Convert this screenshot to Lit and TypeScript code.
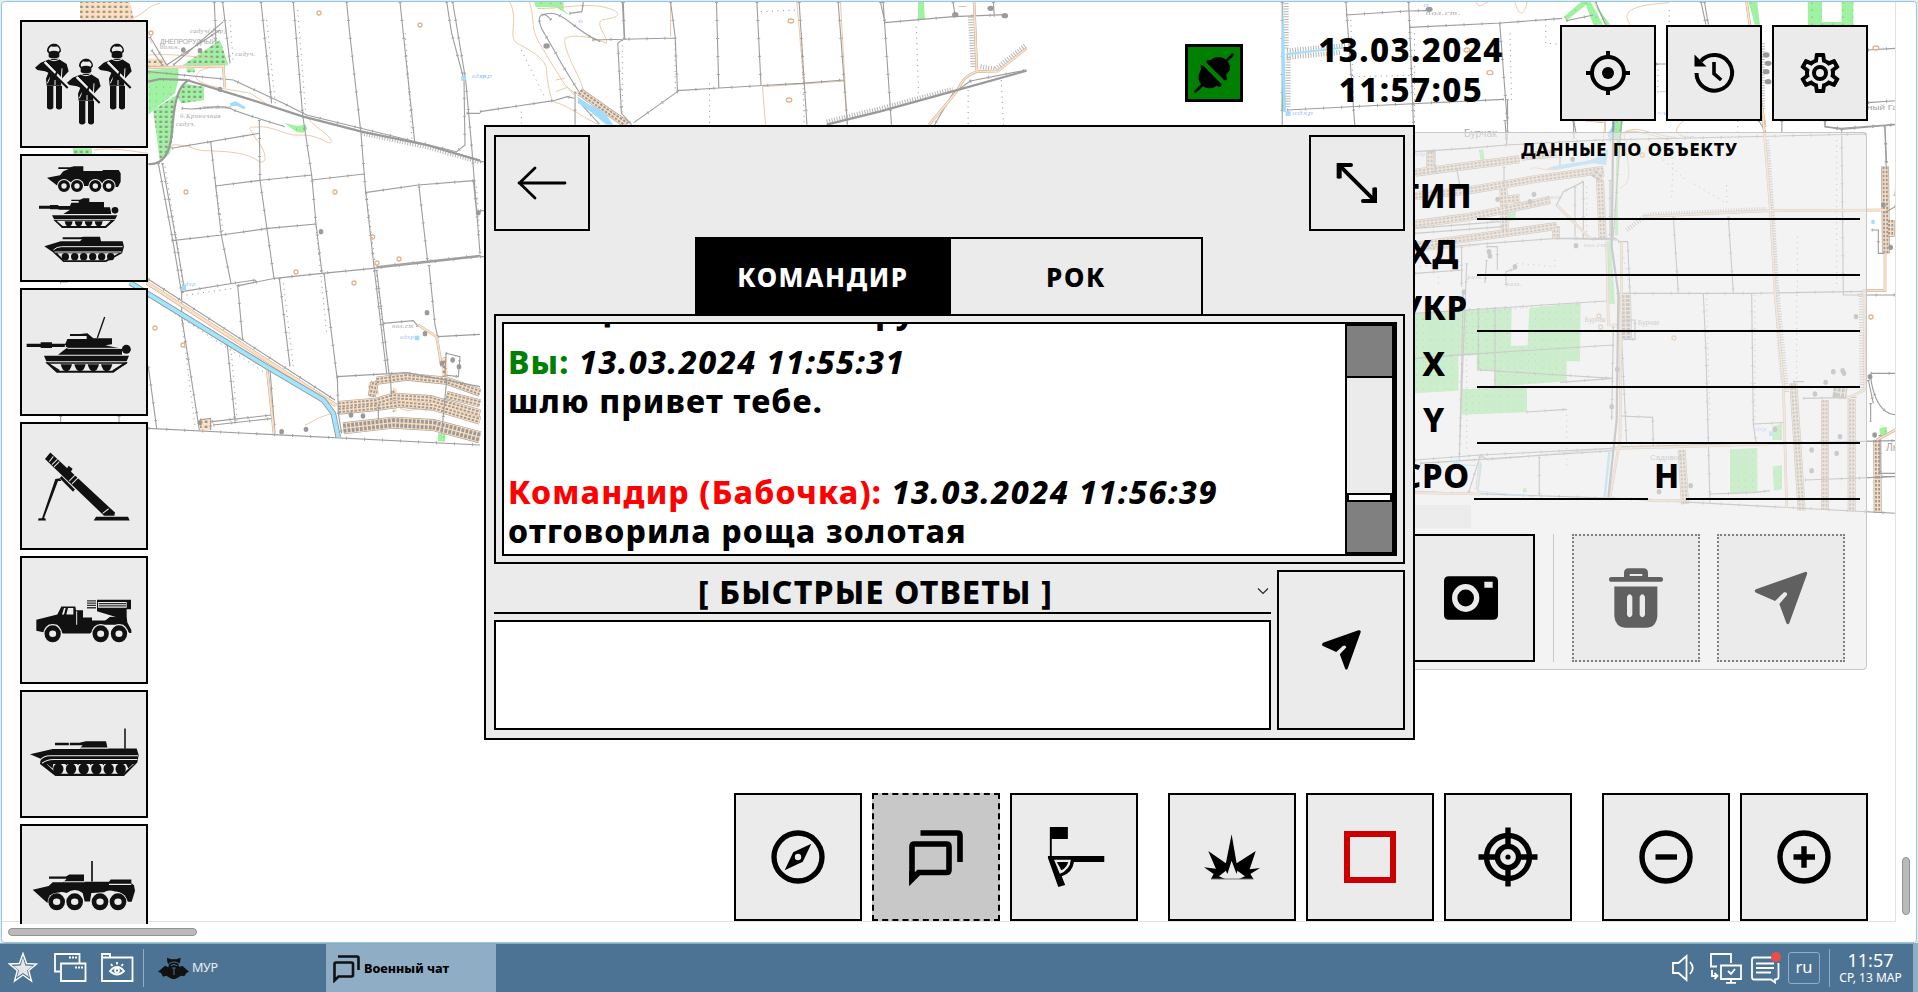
import { LitElement, html, svg, css } from "lit";
import { customElement, property } from "lit/decorators.js";

/* ---------- map geometry, grouped by tile ---------- */

interface Tile {
  transform: string;
  green?: string;
  garden?: string;
  water?: string;
  canal?: string;
  peach?: string;
  street?: string;
  wide?: string;
  road?: string;
  contour?: string;
  rail?: string;
  hatch?: string;
  line: string;
  dots?: string;
  marks?: number[][];
  blobs?: number[][];
  labels?: [number, number, string, string][];
}

const tiles: Tile[] = [
  {
    transform: "scale(.33333)",
    green:
      "M445 210L535 205V240L525 280L460 330L445 345ZM852 368L890 378L918 374L922 388L910 398L890 396ZM1315 1300L1337 1302L1335 1325L1313 1323Z",
    garden:
      "M550 250L612 260V300L545 310L530 290ZM460 330L530 285L520 400L510 460L480 485ZM548 196L660 120L685 196ZM560 205H584V217H560ZM218 445H275V462H220Z",
    water: "M690 310L706 304L738 322L732 328L712 318L692 318ZM545 856H558V870H545ZM1244 1007H1258V1021H1244ZM1384 228H1398V242H1384Z",
    canal: "M390 848L800 1100L970 1200L1000 1240L1015 1312",
    peach: "M240 6L390 6L402 60L240 60ZM445 175L490 178L500 200L445 202ZM1105 1150L1130 1140L1138 1185L1105 1180ZM1178 1165L1190 1165V1235H1178ZM600 1255H632V1290H600ZM1325 1075L1340 1070L1345 1150L1325 1150Z",
    street: "M1015 1215L1130 1205L1180 1190L1290 1197L1440 1240M1015 1232L1130 1221L1200 1211L1300 1220L1440 1262M1130 1142L1220 1130L1340 1142L1440 1178M1340 1185L1440 1210M1115 1190L1125 1145",
    wide: "M1030 1285L1180 1268L1300 1275L1440 1312",
    road: "M440 846L1010 1215M440 850L1006 1217M445 203L670 198L674 262M802 1110L822 1300M1255 975L1310 1010L1325 1100",
    contour:
      "M445 165C520 160 560 170 650 175M675 198C620 200 590 210 588 232C600 262 700 268 750 280C790 300 800 320 830 325M515 435C560 430 590 455 620 452C680 455 740 455 780 486C810 490 790 440 770 420C740 370 740 385 790 380C850 390 860 410 910 405C960 405 990 440 994 425C990 400 950 390 925 355M1005 1240C960 1245 930 1270 915 1276M1280 1235C1260 1210 1240 1245 1200 1225M390 55C430 50 440 15 480 10M455 130C450 110 420 90 410 60M445 460C400 455 340 440 280 450",
    rail: "M445 245L480 237L560 240L740 295L910 350L1085 395L1280 435L1440 482M445 492C490 495 510 460 515 400C520 330 530 250 570 240",
    hatch: "M1085 399L1280 440L1440 486",
    line:
      "M643 6L648 130M668 6L690 190M783 6L815 310M880 6L908 345L935 525L948 672L966 820M972 820L1012 1140M1040 6L1048 90L1083 400L1097 575L1122 800L1160 1120M1200 6L1244 425M1340 6L1355 100L1392 240M1358 6L1397 240L1415 440L1440 760M1130 810L1167 1120M475 490L520 730L545 880V950L598 1290M487 490L530 730L552 860M632 425L664 705L693 850M778 360L780 540L822 835M1257 560L1283 785M1287 795L1305 975L1313 1010M713 855L728 1020M838 835L870 1100M682 1035L706 1270M445 1100L470 1285M515 445L778 400M645 558L790 540L935 525M935 540L1092 522M1095 578L1255 555L1420 542M515 722L665 705L805 685L948 672M545 875L700 850L765 840L770 850M715 857L825 835L966 820L1120 805L1440 770M1130 800L1440 766M1150 970L1240 962L1255 980M1313 1010L1440 1003M1400 340H1440M445 215L700 240L850 310L920 345L1370 455L1395 435L1392 240M445 1285L1440 1335M445 838L1005 1200M445 888L800 1105M1012 1130L1015 1240L1025 1300M1012 1130L1220 1118L1440 1160M635 1265L815 1245M640 1275L820 1255M810 1110L825 1300M500 195L660 90M520 195L670 65M450 110L500 195M455 150L490 200M180 846L203 846M182 1248V1266M357 1248V1266M1340 1140L1325 1300M1170 1120L1175 1190M545 325C600 335 640 310 690 325C720 340 760 350 790 360C820 370 840 375 855 380M1338 1060L1380 1070L1375 1130L1335 1125ZM600 1260L632 1255V1290M1135 1220V1260M1420 540L1430 640",
    dots: "M690 60L700 190M800 60L826 310M893 30L918 350M1216 100L1236 420M495 500L535 750L550 880M648 560L670 700M948 680L980 1000M1100 580L1150 1000M850 850L880 1100M545 960L585 1280M693 1045L712 1270M560 885L700 865M455 895L790 1115M1430 560L1438 700",
    marks: [[453, 99], [957, 39], [1260, 75], [558, 576], [1005, 576], [888, 816], [1062, 849], [1131, 789], [1197, 777], [465, 984], [549, 1035], [1118, 711]],
    blobs: [[1281, 938], [1275, 1001], [1326, 1090], [1377, 1100], [963, 695], [845, 1295], [918, 1288], [600, 1268], [1358, 1080], [1435, 638], [600, 152], [550, 150], [660, 268], [1053, 1245], [1089, 1248]],
    labels: [[570, 98, "садуч(отр)", "i"], [480, 132, "ДНЕПРОРУДНЫЙ", "s"], [480, 148, "больн.", "i"], [706, 167, "садуч.", "i"], [608, 328, "пионегка", "i"], [540, 354, "б.Криничная", "i"], [528, 377, "садуч.", "i"], [545, 858, "вдхр", "b"], [1200, 1017, "вдхр", "b"], [1176, 983, "пол.ст", "i"], [1416, 233, "вдхр", "b"]]
  },
  {
    transform: "translate(480 0) scale(.4592 .33333)",
    green: "M118 6H182V30L197 48L165 22H122ZM954 6H967L969 60L954 56Z",
    water: "M212 290L240 315L270 335L290 374H275L245 340L215 310Z",
    street: "M217 275L320 374",
    road: "M1076 6L1082 215L1128 213L1190 145M1082 215C1050 230 1050 250 1035 280L978 374",
    contour:
      "M65 6C85 60 60 110 80 130C110 150 150 180 145 220C150 270 155 300 160 305C200 320 230 360 260 374M108 6C120 60 110 90 130 130C150 180 170 220 185 255C200 270 210 290 215 275M125 25C170 30 240 0 290 30C310 45 300 52 265 60C250 75 280 110 275 130L250 115C220 108 200 105 185 115C180 150 215 220 225 270L330 374M415 6V110M690 6L705 245M785 6L800 374M615 260L795 243M615 260L622 374M165 240L185 235M165 275L190 262L205 285",
    rail: "M755 374L870 335L1035 272L1190 212",
    hatch: "M755 366L870 327L1030 268M1068 50L1074 205M1090 200L1122 208L1190 135",
    line:
      "M312 6L315 115M310 6L314 115L300 130L308 340L330 374M415 6L425 110L430 272M515 6L520 265M603 6L612 258M695 6L712 374M780 6L800 374M878 6L896 374M872 6L882 68L1030 50L1145 44M1030 6L1035 50M1118 6L1120 50M245 120L425 114M430 272L520 264L700 250L792 240M430 275L335 368M0 335L160 302L190 290L205 295M207 275V374M155 60C130 20 120 60 140 100L165 160C180 200 200 240 215 275M135 45C180 20 200 90 262 125M215 305L260 372M1068 243L1190 210M1068 243L1030 280L990 374M0 485H10M0 632H10M0 770H10M195 40L222 35L225 6",
    dots: "M310 120V370M500 250V374M612 35L690 30M950 80L955 280M1063 270V374M1135 240L1140 374M90 150L140 290M90 335V370M700 100L706 370M425 130V270",
    marks: [[677, 63], [673, 300]],
    blobs: [[1035, 44], [1112, 25], [1143, 47], [145, 138]],
    labels: [[214, 68, "о", "b"], [0, 233, "тр", "b"], [1042, 24, "—", "i"]]
  },
  {
    transform: "translate(1150 0) scale(.4898 .33333)",
    green:
      "M845 50L880 6H900L925 74H905L890 15L850 62ZM905 6L940 74H930ZM1222 6H1240L1245 74H1235ZM1343 6H1372V66H1412V6H1436V75H1343ZM948 362H966L958 420H948ZM270 165L278 330H268Z",
    water: "M272 6L275 160L278 336H272L268 160ZM277 160L400 140V145L277 166ZM277 334H287V348H277ZM934 405L948 365L952 370L940 430Z",
    road: "M1218 6L1250 330L1256 380M925 330V362",
    contour: "M980 74C960 30 990 15 1060 8M745 6C755 60 765 40 770 6M665 6C675 30 680 10 690 6M970 420C960 380 990 390 1060 420M1090 362C1060 395 1080 415 1110 410M930 362V398M1040 275H1055",
    hatch: "M280 152L400 137M280 172L390 157M278 10V150M282 170V320M1250 130V330",
    line:
      "M270 6V376M400 6L418 376M528 6L538 376L530 70M400 45L525 33L565 32M530 82L716 69L842 55M714 69L730 376L728 435M1125 6L1135 74M1132 6L1140 74M865 362L870 400M280 330L440 318L722 298M1033 192H1053M1466 150L1522 145M1466 308L1522 302M1378 362V380L1412 385L1522 373M1500 376L1503 500M850 62L905 45M910 6L930 74M1290 362V398M730 298V376M1243 362L1258 398",
    dots: "M540 100V370M808 60V130L835 132M410 60L415 300M1037 192V280M1200 362V398M1060 30V74M415 230L540 226M735 100L738 300",
    marks: [[647, 150], [694, 218], [1482, 144], [502, 258]],
    blobs: [[570, 28], [1258, 165], [1262, 190], [1258, 215], [1262, 245]],
    labels: [[563, 46, "пол.ст.", "i"], [291, 345, "вдхр", "b"], [558, 20, "о", "b"], [1464, 330, "ный  Гай", "s"], [1035, 346, "~v~", "b"]]
  },
  {
    transform: "translate(1400 120) scale(.33333)",
    green:
      "M42 582L335 563L333 678L383 676L388 563L542 548L540 724H500V784L283 800V752H230V705L175 708V812L42 820ZM185 808L381 800V877L185 884ZM237 90L250 88L255 130L243 132ZM650 6L665 20L652 180L655 345L645 348ZM620 365L632 362L645 552H625ZM990 988L1072 984V1116L990 1122ZM1118 1040L1146 1036V1108L1122 1112ZM1118 918L1146 912V960H1118ZM318 278L348 270L345 300L322 305ZM1438 925L1460 920L1462 945L1440 948ZM370 1105H380V1117H368Z",
    water: "M440 146C500 125 560 130 590 112L625 88L618 135L580 130C540 135 500 150 440 146ZM625 990L632 992L618 1132H610ZM240 1030L246 1032L236 1112L400 1128V1131L232 1115ZM1107 934H1120V948H1107ZM160 1022H178V1034H160ZM165 1032L230 1035V1038L165 1035ZM1414 300H1424V311H1414Z",
    street:
      "M45 158L180 140L358 118M90 95V150M365 110L470 100M45 228L200 212L420 175L610 150M310 205L315 350M45 312L200 292L300 272L450 240M45 378L150 362L300 342L470 318M600 180L608 355M468 318V355M300 240L360 235M1180 790L1205 1172M1275 840V1170M1355 838V1174M845 990L855 1152M1455 140L1458 400M1472 300V350M1432 960L1433 1178",
    wide: "M675 525L678 655M1300 815L1340 820M585 175L600 155",
    road: "M1090 0L1112 280L1125 520L1150 790L1160 1164M470 255L570 355M555 0L610 5M730 290L1110 272L1455 270M1455 400V512H1392L1395 810L1340 835M635 985L855 980L1160 970M45 1118L240 1122M240 1025L230 1110M620 365L625 615H650M665 365L660 960L630 1130M1430 960L1486 930M740 1142H850",
    contour: "M680 60C670 100 700 150 680 190L660 205M390 150C400 130 440 165 500 140M615 0L608 80M45 395L240 375M265 1020L640 984M665 45C700 5 760 50 830 52",
    rail: "M640 0L635 380L655 520L650 900L625 1132",
    hatch: "M680 330L740 285L1100 268M1100 60L1120 330L1140 700L1150 790M1104 90L1128 480L1160 820M1384 520L1386 810",
    line:
      "M45 95L200 85L320 75L600 60L1400 42M315 0L320 75M520 0L522 55M1275 0V20L1325 28L1486 14M1455 16L1460 130M1325 28L1330 525H1486M820 290L835 520M985 290L1000 518M650 520L1050 520L1395 514M910 520L918 700L930 1152M1055 520L1060 915L1068 965M45 715L200 703L640 675M240 750L640 775L480 787M45 580L620 543M235 565V752M285 562V800M185 560L190 510L178 1020M660 888L758 892L760 980M380 876L500 868M45 1020L240 1005L640 985M60 1030L640 992M1060 912L1150 908M655 365H683L690 520M45 390L200 375L470 355L650 355M45 460L190 450M665 980L1486 962M240 1005L265 1020M418 1010V1130M240 1010L205 1120M45 1115L650 1135L1486 1180M930 1122L1060 1118L1110 1112M1210 835L1370 832M1215 1080L1486 1070M1412 760H1486M1412 770C1415 800 1430 880 1486 884M1405 780L1420 850M1415 330H1435V400H1455M1486 260L1450 280M1440 945V1060H1486M1445 1070H1486M470 255L490 215L550 185V355M170 145L180 200M312 140V200M480 110V140M525 200V350M45 325L300 305M260 380H292V450M260 420L255 490M318 495V455L350 445M660 600H705V658H670M665 660L680 970M640 620L635 900M45 340L310 320M665 0L640 350M630 180V350M185 380V500M200 430L178 1010M1180 785H1212M470 355L655 360M1412 850V905M90 95H105V160",
    dots: "M820 80L815 240M980 195V250L870 185M50 600L400 560M500 868V1050M920 520L930 900M1065 525V900M1192 350V520M465 420V440L350 430M115 470V500M1190 525V780M665 380L690 510M790 120L860 180M50 160L180 145M1310 60V500M60 440L180 425M560 200V340M200 570V1000",
    marks: [[727, 105], [597, 588], [602, 621], [822, 654], [1413, 591]],
    blobs: [[402, 223], [390, 245], [293, 238], [528, 377], [267, 395], [270, 408], [345, 440], [192, 516], [1368, 590], [1300, 755], [1328, 752], [1332, 760], [1277, 787], [872, 1097], [1125, 928], [777, 1115], [1245, 822], [1305, 825], [1410, 770], [1424, 945], [1472, 382], [1450, 255], [635, 860], [652, 748], [518, 118], [1235, 990], [1235, 1052], [1310, 1000], [1320, 950]],
    labels: [[45, 108, "вдр", "b"], [192, 50, "Бурчак", "L"], [440, 236, "разв.", "i"], [552, 382, "пол.ст.", "i"], [202, 478, "разв.", "i"], [318, 499, "разв.", "i"], [554, 605, "Бурчак", "s"], [714, 616, "Бурчак", "s"], [750, 1019, "Садовое", "M"], [1058, 932, "вдхр", "b"], [1458, 992, "Лю", "L"], [1480, 228, "Л", "L"], [270, 306, "шк.", "i"]]
  }
];

@customElement("terrain-map")
export class TerrainMap extends LitElement {
  static styles = css`
    :host { display: block; }
    svg { display: block; width: 100%; height: 100%; }
    path { fill: none; vector-effect: non-scaling-stroke; }
    .green { fill: #9ff29f; }
    .speck { fill: url(#specks); }
    .plots { fill: url(#plots); }
    .water { fill: #9fdcff; }
    .canal-edge { stroke: #9a9a9a; stroke-width: 5.6; }
    .canal { stroke: #9fe6ff; stroke-width: 3.8; }
    .peach { fill: #ffdfbf; }
    .road-edge { stroke: #b4a898; stroke-width: 2.6; }
    .road { stroke: #ffdfbf; stroke-width: 1.8; }
    .street-edge { stroke: #a8a29c; stroke-width: 8; }
    .street { stroke: #fbdcbd; stroke-width: 6.8; }
    .houses { stroke: #9a9a9a; stroke-width: 5; stroke-dasharray: 2.5 1.5; }
    .core { stroke: #fbdcbd; stroke-width: 1.3; }
    .wide-edge { stroke: #a8a29c; stroke-width: 12; }
    .wide { stroke: #fbdcbd; stroke-width: 10.8; }
    .wide-houses { stroke: #9a9a9a; stroke-width: 9; stroke-dasharray: 2.8 1.3; }
    .contour { stroke: #e6c4a2; stroke-width: 0.9; }
    .rail { stroke: #9a9a9a; stroke-width: 2.2; }
    .hatch { stroke: #b5b5b5; stroke-width: 5; stroke-dasharray: 1 1.6; }
    .line { stroke: #9d9d9d; stroke-width: 1.1; }
    .ticks { stroke: #a4a4a4; stroke-width: 3; stroke-dasharray: 1 17; }
    .dots { stroke: #909090; stroke-width: 1; stroke-dasharray: 1 4.5; }
    .mark { stroke: #e0b48c; stroke-width: 1.3; }
    .blob { fill: #9a9a9a; }
    text { font-family: "Liberation Serif", serif; font-style: italic; font-size: 20px; letter-spacing: 1.5px; fill: #a4a4a4; }
    .b { fill: #9fbfff; }
    .s, .M, .L { font-family: "Liberation Sans", sans-serif; font-style: normal; letter-spacing: 0; font-size: 20px; }
    .M { font-size: 24px; }
    .L { font-size: 31px; }
  `;

  render() {
    return html`<svg viewBox="0 0 1895 921" preserveAspectRatio="xMinYMin slice">
      <defs>
        <pattern id="specks" width="21" height="21" patternUnits="userSpaceOnUse">
          <rect x="6" y="8" width="3" height="3" fill="#8fae8f"></rect>
        </pattern>
        <pattern id="plots" width="17" height="15" patternUnits="userSpaceOnUse">
          <rect x="2" y="2" width="8" height="7" fill="#8c988c"></rect>
        </pattern>
      </defs>
      ${tiles.map(
        (t) => svg`<g transform=${t.transform}>
          <path class="green" d=${t.green ?? ""}></path>
          <path class="speck" d=${t.green ?? ""}></path>
          <path class="green" d=${t.garden ?? ""}></path>
          <path class="plots" d=${t.garden ?? ""}></path>
          <path class="peach" d=${t.peach ?? ""}></path>
          <path class="plots" d=${t.peach ?? ""}></path>
          <path class="contour" d=${t.contour ?? ""}></path>
          <path class="street-edge" d=${t.street ?? ""}></path>
          <path class="street" d=${t.street ?? ""}></path>
          <path class="houses" d=${t.street ?? ""}></path>
          <path class="core" d=${t.street ?? ""}></path>
          <path class="wide-edge" d=${t.wide ?? ""}></path>
          <path class="wide" d=${t.wide ?? ""}></path>
          <path class="wide-houses" d=${t.wide ?? ""}></path>
          <path class="core" d=${t.wide ?? ""}></path>
          <path class="line" d=${t.line}></path>
          <path class="ticks" d=${t.line}></path>
          <path class="dots" d=${t.dots ?? ""}></path>
          <path class="hatch" d=${t.hatch ?? ""}></path>
          <path class="road-edge" d=${t.road ?? ""}></path>
          <path class="road" d=${t.road ?? ""}></path>
          <path class="canal-edge" d=${t.canal ?? ""}></path>
          <path class="canal" d=${t.canal ?? ""}></path>
          <path class="water" d=${t.water ?? ""}></path>
          <path class="rail" d=${t.rail ?? ""}></path>
          ${(t.marks ?? []).map(([x, y]) => svg`<path class="mark" d="M${x - 6} ${y}a6 6 0 1 0 12 0a6 6 0 1 0 -12 0"></path>`)}
          ${(t.blobs ?? []).map(([x, y]) => svg`<path class="blob" d="M${x - 7} ${y}a7 8 0 1 0 14 0a7 8 0 1 0 -14 0"></path>`)}
          ${(t.labels ?? []).map(([x, y, s, c]) => svg`<text class=${c} x=${x} y=${y}>${s}</text>`)}
        </g>`
      )}
    </svg>`;
  }
}

/* ---------- pictograms: view box plus drawing ---------- */

const soldier = (dx: number, dy: number) => svg`<g transform="translate(${dx} ${dy})">
  <path d="M141 154C141 124 183 124 183 154L178 160V170C172 176 150 176 146 170V160Z"/>
  <path class="light" d="M146 150C148 133 177 133 179 150L176 155C168 151 156 151 148 155Z"/>
  <path d="M156 132H170V140H156Z"/>
  <path d="M150 177L122 188L105 203L112 210L135 214L145 218L138 236L140 257H184L182 240L206 214L200 192L175 176Z"/>
  <path d="M141 258H160V324Q150 333 141 324ZM168 258H186V324Q177 333 168 324Z"/>
  <path class="lightline" d="M146 177Q162 187 178 177M137 185L176 226M186 205L184 236M150 232L142 250M165 240V255"/>
  <path d="M132 188L186 242" stroke="#ebebeb" stroke-width="11"/>
  <path d="M128 190L203 264" stroke="#111" stroke-width="6"/><path d="M150 232L160 246M172 214L160 240" stroke="#111" stroke-width="6"/>
</g>`;

const wheels = (xs: number[], cy: number, rx: number, ry: number, w: number) =>
  xs.map((x) => svg`<ellipse cx=${x} cy=${cy} rx=${rx} ry=${ry} fill="none" stroke="#111" stroke-width=${w}/>`);
const discs = (xs: number[], cy: number, rx: number, ry: number) =>
  xs.map((x) => svg`<ellipse cx=${x} cy=${cy} rx=${rx} ry=${ry}/>`);

const icons: Record<string, [string, unknown]> = {
  squad: ["60 60 384 384", svg`${soldier(0, 0)}${soldier(189, 0)}${soldier(96, 45)}`],
  vehicles: ["60 462 384 384", svg`
    <path d="M175 502H210L222 499H250V513H308V510H356L362 520V545L354 561H342Q325 535 308 550L300 545H270L266 558H252L248 545Q230 535 215 548Q190 530 176 560L141 533L180 526L190 514L206 507H175Z"/>
    ${[192, 231, 286, 326].map((x) => svg`<circle class="light" cx=${x} cy="558" r="21"/>`)}
    ${wheels([192, 231, 286, 326], 558, 13, 13, 10)}
    <path d="M117 617H150V615H175V618H210L214 608H236V603H214V599H240L250 595H268V606H312V622H330L334 642H190L210 629H175V628H150V626H117Z"/>
    <circle cx="345" cy="631" r="10"/>
    <path d="M156 646H352L346 657H162ZM160 659H346L318 684H186Z"/>
    <path class="light" d="M170 662H332L316 678H188Z"/>
    ${[206, 236, 266, 296].map((x) => svg`<path d="M${x - 12} 664H${x + 12}Q${x + 9} 680 ${x} 680Q${x - 9} 680 ${x - 12} 664"/>`)}
    <path d="M188 712H240L252 710H300L303 724H368L372 740L366 760L318 786H190L158 756L133 739L182 724H240L246 718H188Z"/>
    <path class="lightline" d="M160 750Q170 740 185 740H368M164 756H364"/>
    <path class="light" d="M172 760H356L316 781H192Z"/>
    ${discs([196, 224, 251, 278, 305, 332], 770, 11, 11)}`],
  tank: ["60 864 384 384", svg`
    <path d="M80 1031H122V1027H156V1031H196L202 1017H260V1008H210V1002H240L262 1000L280 1015H336V1033L316 1036L366 1046V1064H174L204 1041H156V1044H122V1041H80Z"/>
    <path d="M314 951L292 1014" stroke="#111" stroke-width="4"/><circle cx="379" cy="1048" r="13.500"/>
    <path class="lightline" d="M202 1045H366M196 1035V1046"/>
    <path d="M132 1067H387L380 1084H139ZM136 1087H384L340 1118H170Z"/>
    <path class="light" d="M148 1091H368L336 1112H176Z"/>
    ${[199, 240, 280, 320].map((x) => svg`<path d="M${x - 17} 1093H${x + 17}Q${x + 12} 1114 ${x} 1114Q${x - 12} 1114 ${x - 17} 1093"/>`)}
    <path d="M140 1088L178 1112M380 1088L340 1112" stroke="#111" stroke-width="5"/>`],
  mortar: ["60 58 384 339", svg`
    <path d="M151 139L345 298L343 306H312L135 156Z"/>
    <path class="lightline" d="M148 163L160 149M156 171L172 157M162 177L178 163M208 214L228 196M216 222L236 204M308 300L326 288"/>
    <path d="M182 204L222 240" stroke="#111" stroke-width="8"/><path d="M203 178L215 186" stroke="#111" stroke-width="10"/>
    <path d="M180 207L166 209L126 313H116L114 319H138L136 313H132L174 214H184Z"/>
    <path d="M288 309H384L389 319H281Z"/>`],
  rocket: ["60 414 384 339", svg`
    <path d="M109 583L172 569L184 548H226L228 558H249V577H276V585H315L330 575H345L291 560V530H393V555H380V574L382 590L394 610V618H388L370 596H300L270 619H188L172 596H145L130 616L109 612Z"/>
    <path class="light" d="M294 536H380V551H294ZM186 569L192 552H197L192 569ZM199 569L204 552H220V569ZM291 564L350 576L330 574L318 583H291Z"/>
    <path d="M296 540H378M296 546H378M261 533H288M261 539H288M261 545H288M261 551H288" stroke="#333" stroke-width="3.500"/>
    <path class="lightline" d="M230 560V596"/>
    <ellipse class="light" cx="158" cy="620" rx="28" ry="26"/><ellipse class="light" cx="302" cy="620" rx="28" ry="26"/><ellipse class="light" cx="357" cy="620" rx="28" ry="26"/>
    ${wheels([158, 302, 357], 620, 17.5, 15.5, 14)}`],
  bmp: ["60 768 384 339", svg`
    <path d="M165 908H238L258 904H318L323 923H410L416 940L412 960L372 996H166L120 964L122 950L90 938L158 924H238L248 914H165Z"/>
    <path d="M375 870V924" stroke="#444" stroke-width="6"/>
    <path class="lightline" d="M118 956Q130 942 150 942H414M126 962Q140 952 160 952H412M236 922H325M208 905V915"/>
    <path class="light" d="M140 964H402L368 990H170Z"/>
    <path d="M135 960L160 960L158 976ZM375 958H406L385 976Z"/>
    ${discs([175, 213, 251, 289, 326, 362], 977, 15.5, 15)}
    <path d="M190 961L200 967L206 961ZM228 961L234 967L240 961ZM266 961L272 967L278 961ZM304 961L310 967L316 961Z"/>`],
  apc: ["60 1123 384 339", svg`
    <path d="M147 1262H198L208 1257H252V1276H327L332 1270H394V1280L402 1285L405 1300L395 1329H384Q370 1300 345 1302Q325 1295 312 1304L274 1306L270 1328H254L248 1306Q225 1290 200 1306Q165 1294 142 1332L98 1297L146 1287L158 1277H190L200 1268H147Z"/>
    <path d="M276 1221V1275" stroke="#111" stroke-width="5"/>
    <path class="lightline" d="M192 1276H254M327 1283H394"/>
    ${[170, 224, 300, 354].map((x) => svg`<ellipse class="light" cx=${x} cy="1329" rx="27" ry="24"/>`)}
    ${wheels([170, 224, 300, 354], 1329, 18, 15.5, 14)}`],
  compass: ["0 0 128 128", svg`<g transform="translate(32 32) scale(2.6667)"><path fill-rule="evenodd" d="M7,17L10.2,10.2L17,7L13.8,13.8L7,17M12,10.8A1.2,1.2 0 0,0 10.8,12A1.2,1.2 0 0,0 12,13.2A1.2,1.2 0 0,0 13.2,12A1.2,1.2 0 0,0 12,10.8M12,2A10,10 0 0,1 22,12A10,10 0 0,1 12,22A10,10 0 0,1 2,12A10,10 0 0,1 12,2M12,4A8,8 0 0,0 4,12A8,8 0 0,0 12,20A8,8 0 0,0 20,12A8,8 0 0,0 12,4Z"/></g>`],
  chat: ["0 0 128 128", svg`<path class="k" stroke-width="5.600" d="M48.500 40H85.500Q88 40 88 42.500V69"/><path class="k" stroke-width="5.600" d="M40 85V53.500Q40 51 42.500 51H74.500Q77 51 77 53.500V77Q77 79.500 74.500 79.500H46.500L40 86Z"/><path d="M37.200 93L48 82L40 78H37.200Z"/>`],
  flag: ["758 39 334 384", svg`<path d="M862 141H909V177H867V228H1004V246H925Q920 280 893 289L902 315L884 321L857 234V228H862Z"/><path class="light" d="M873 239H917Q914 270 888 281Z"/><path d="M880 246H910Q905 264 892 271Z"/>`],
  blast: ["1171 39 334 384", svg`<path d="M1337 163L1350 250L1400 213L1384 268L1411 264L1386 282L1394 297H1356L1372 289L1352 272L1350 282L1337 242L1326 282L1322 272L1304 289L1320 297H1283L1290 282L1265 262L1296 266L1276 213L1322 250Z"/><path d="M1283 297H1394" stroke="#777" stroke-width="3"/>`],
  square: ["0 0 128 128", svg`<rect x="41" y="41" width="46" height="46" fill="none" stroke="#c00" stroke-width="6"/>`],
  target: ["0 0 128 128", svg`<g class="k" stroke-width="5.400"><circle cx="64" cy="64" r="21.500"/><circle cx="64" cy="64" r="10.600"/><path d="M64 34.500V54M64 74V93.500M34.500 64H54M74 64H93.500"/></g><circle cx="64" cy="64" r="2.600"/>`],
  minus: ["0 0 128 128", svg`<g class="k" stroke-width="5.400"><circle cx="64" cy="64" r="24"/><path d="M53.500 64H75"/></g>`],
  plus: ["0 0 128 128", svg`<g class="k" stroke-width="5.400"><circle cx="64" cy="64" r="24"/><path d="M53.500 64H75M64 53.300V74.700"/></g>`],
  locate: ["1170 45 288 288", svg`<g class="k" stroke-width="12"><circle cx="1314" cy="189" r="48"/><path d="M1314 123V142M1314 236V255M1248 189H1266M1362 189H1380"/></g><circle cx="1314" cy="189" r="18"/>`],
  history: ["0 0 96 96", svg`<path class="k" stroke-width="4" d="M30.500 48A17.800 17.800 0 1 0 35 36"/><path d="M28.500 29.500L40.500 41.500H28.500Z"/><path class="k" stroke-width="3.600" d="M48 37V48.700L55.200 55"/>`],
  gear: ["0 0 96 96", svg`<g transform="translate(24 24) scale(2)"><path fill-rule="evenodd" d="M12,8A4,4 0 0,1 16,12A4,4 0 0,1 12,16A4,4 0 0,1 8,12A4,4 0 0,1 12,8M12,10A2,2 0 0,0 10,12A2,2 0 0,0 12,14A2,2 0 0,0 14,12A2,2 0 0,0 12,10M10,22C9.75,22 9.54,21.82 9.5,21.58L9.13,18.93C8.5,18.68 7.96,18.34 7.44,17.94L4.95,18.95C4.73,19.03 4.46,18.95 4.34,18.73L2.34,15.27C2.21,15.05 2.27,14.78 2.46,14.63L4.57,12.97L4.5,12L4.57,11L2.46,9.37C2.27,9.22 2.21,8.95 2.34,8.73L4.34,5.27C4.46,5.05 4.73,4.96 4.95,5.05L7.44,6.05C7.96,5.66 8.5,5.32 9.13,5.07L9.5,2.42C9.54,2.18 9.75,2 10,2H14C14.25,2 14.46,2.18 14.5,2.42L14.87,5.07C15.5,5.32 16.04,5.66 16.56,6.05L19.05,5.05C19.27,4.96 19.54,5.05 19.66,5.27L21.66,8.73C21.79,8.95 21.73,9.22 21.54,9.37L19.43,11L19.5,12L19.43,13L21.54,14.63C21.73,14.78 21.79,15.05 21.66,15.27L19.66,18.73C19.54,18.95 19.27,19.04 19.05,18.95L16.56,17.95C16.04,18.34 15.5,18.68 14.87,18.93L14.5,21.58C14.46,21.82 14.25,22 14,22H10M11.25,4L10.88,6.61C9.68,6.86 8.62,7.5 7.85,8.39L5.44,7.35L4.69,8.65L6.8,10.2C6.4,11.37 6.4,12.64 6.8,13.8L4.68,15.36L5.43,16.66L7.86,15.62C8.63,16.5 9.68,17.14 10.87,17.38L11.24,20H12.76L13.13,17.39C14.32,17.14 15.37,16.5 16.14,15.62L18.57,16.66L19.32,15.36L17.2,13.81C17.6,12.64 17.6,11.37 17.2,10.2L19.31,8.65L18.56,7.35L16.15,8.39C15.38,7.5 14.32,6.86 13.12,6.62L12.75,4H11.25Z"/></g>`],
  back: ["0 0 96 96", svg`<path class="k" stroke-width="2.800" stroke-linecap="round" stroke-linejoin="round" d="M71 48H25M41 33L25.500 48L41 63"/>`],
  expand: ["417 375 288 288", svg`<path class="k" stroke-width="12" stroke-linecap="round" d="M507 500V465H543M579 573H615V538M508 466L614 572"/><path d="M500 459H515V505H500ZM607 533H621V579H607Z"/>`],
  camera: ["21 1107 384 378", svg`<path fill-rule="evenodd" d="M147 1232H279Q294 1232 294 1247V1346Q294 1360 279 1360H147Q132 1360 132 1346V1247Q132 1232 147 1232ZM253 1248V1266H278V1248ZM197 1255A41 41 0 1 0 197 1337A41 41 0 1 0 197 1255ZM197 1271A25 25 0 1 1 197 1321A25 25 0 1 1 197 1271Z"/>`],
  trash: ["516 1107 384 378", svg`<g fill="#606060"><path fill-rule="evenodd" d="M672 1234V1222Q672 1208 686 1208H730Q744 1208 744 1222V1234H781Q789 1234 789 1241Q789 1248 781 1248H635Q627 1248 627 1241Q627 1234 635 1234ZM689 1225V1231H727V1225Z"/><path fill-rule="evenodd" d="M643 1262H772V1350Q768 1384 738 1384H676Q646 1382 643 1350ZM681 1292V1346Q689 1360 697 1346V1292Q689 1278 681 1292ZM719 1292V1346Q727 1360 735 1346V1292Q727 1278 719 1292Z"/></g>`],
  plane: ["951 1107 384 378", svg`<g fill="#606060"><path d="M1215 1219Q1223 1217 1221 1226L1168 1370Q1163 1377 1159 1370L1138 1314L1161 1287Q1163 1277 1152 1279L1125 1305L1067 1280Q1061 1274 1068 1270Z"/></g>`],
  send: ["1329 810 214 480", svg`<path d="M1465 991Q1470 990 1469 996L1447 1106Q1445 1111 1443 1106L1434 1063L1445 1042Q1443 1034 1439 1038L1428 1056L1405 1037Q1403 1032 1406 1028Z"/>`],
  plug: ["45 102 174 174", svg`<path d="M122 150Q138 136 160 144Q184 158 180 180L168 194L172 204Q172 213 163 211L110 158Q108 149 116 150Z"/><path d="M188 134L166 156" stroke="#000" stroke-width="8" stroke-linecap="round"/><path d="M92 167Q97 164 101 168L154 222Q157 230 148 231L140 227Q124 240 104 232Q82 220 86 196L93 178Z"/><path d="M77 244L98 224" stroke="#000" stroke-width="8" stroke-linecap="round"/>`],
};

@customElement("tool-button")
export class ToolButton extends LitElement {
  @property() icon = "";
  @property({ reflect: true }) kind = "";

  static styles = css`
    :host { display: block; box-sizing: border-box; width: 128px; height: 128px; flex: none; background: #ebebeb; border: 2px solid #000; }
    :host([kind~="small"]) { width: 96px; height: 96px; }
    :host([kind~="tall"]) { height: 160px; }
    :host([kind~="on"]) { background: #c8c8c8; border-style: dashed; }
    :host([kind~="off"]) { border: 2px dotted #808080; }
    :host([kind~="status"]) { width: 58px; height: 58px; background: #008000; border-width: 3px; }
    svg { display: block; width: calc(100% + 4px); height: calc(100% + 4px); margin: -2px; fill: #000; }
    :host([kind~="status"]) svg { width: 58px; height: 58px; margin: -3px; }
    :host([kind~="unit"]) svg { fill: #111; }
    .light { fill: #ebebeb; }
    .lightline { fill: none; stroke: #ebebeb; stroke-width: 3px; }
    .k { fill: none; stroke: #000; }
  `;

  render() {
    const [box, art] = icons[this.icon] ?? ["0 0 1 1", ""];
    return html`<svg viewBox=${box} preserveAspectRatio="none">${art}</svg>`;
  }
}

@customElement("chat-window")
export class ChatWindow extends LitElement {
  static styles = css`
    :host { display: flex; flex-direction: column; box-sizing: border-box; width: 931px; height: 615px; border: 2px solid #000; background: #ebebeb; padding: 8px; font: 800 32px/39px "Noto Sans", sans-serif; letter-spacing: 1.17px; color: #000; }
    .head { display: flex; justify-content: space-between; }
    .tabs { display: flex; width: 508px; margin: 6px 0 0 201px; height: 77px; }
    .tab { flex: 1; box-sizing: border-box; border: 2px solid #000; border-bottom: 0; font-size: 26px; letter-spacing: 1.6px; line-height: 76px; text-align: center; }
    .tab.active { flex: 0 0 256px; background: #000; color: #fff; }
    .tab.idle { border-left: 0; }
    .frame { box-sizing: border-box; height: 250px; border: 2px solid #000; padding: 6px; }
    .log { display: flex; box-sizing: border-box; height: 234px; border: 2px solid #000; background: #fff; }
    .lines { flex: 1; display: flex; flex-direction: column; justify-content: flex-end; overflow: hidden; padding: 0 0 4px 4px; }
    .msg { flex: none; white-space: pre; margin-top: 12.600px; }
    .msg .blank { height: 39px; }
    .cut { display: flex; height: 39px; }
    .cut .a { padding-left: 81px; width: 286px; }
    .who { color: #008000; }
    .who.boss { color: #f00; }
    .when { font-style: italic; letter-spacing: 1.45px; }
    .bar { display: flex; flex-direction: column; box-sizing: border-box; width: 50px; background: #ebebeb; border: solid #000; border-width: 2px 3px 2px 2px; }
    .cap { height: 50px; background: #808080; }
    .track { flex: 1; border-top: 2px solid #000; display: flex; flex-direction: column; justify-content: flex-end; }
    .thumb { height: 5px; background: #fff; border: 2px solid #000; }
    .foot { display: flex; gap: 6px; margin-top: 6px; }
    .entry { flex: 1; display: flex; flex-direction: column; gap: 6px; }
    .quick { display: flex; align-items: center; box-sizing: border-box; height: 44px; border-bottom: 2px solid #000; }
    .quick .label { flex: 1; text-align: center; line-height: 43px; }
    .quick svg { width: 14px; height: 10px; }
    .box { flex: 1; box-sizing: border-box; border: 2px solid #000; background: #fff; }
  `;

  render() {
    return html`
      <div class="head">
        <tool-button icon="back" kind="small"></tool-button>
        <tool-button icon="expand" kind="small"></tool-button>
      </div>
      <div class="tabs">
        <div class="tab active">КОМАНДИР</div>
        <div class="tab idle">РОК</div>
      </div>
      <div class="frame">
        <div class="log">
          <div class="lines">
            <div class="msg cut"><span class="a">ц</span><span>ру</span></div>
            <div class="msg"><span class="who">Вы:</span> <span class="when">13.03.2024 11:55:31</span><br>шлю привет тебе.<div class="blank"></div></div>
            <div class="msg"><span class="who boss">Командир (Бабочка):</span> <span class="when">13.03.2024 11:56:39</span><br>отговорила роща золотая</div>
          </div>
          <div class="bar">
            <div class="cap"></div>
            <div class="track"><div class="thumb"></div></div>
            <div class="cap"></div>
          </div>
        </div>
      </div>
      <div class="foot">
        <div class="entry">
          <div class="quick">
            <span class="label">[ БЫСТРЫЕ ОТВЕТЫ ]</span>
            <svg viewBox="0 0 14 10"><path d="M1 2.500L6 7.500L11 2.500" fill="none" stroke="#222" stroke-width="1.100"></path></svg>
          </div>
          <div class="box"></div>
        </div>
        <tool-button icon="send" kind="tall"></tool-button>
      </div>
    `;
  }
}

@customElement("object-panel")
export class ObjectPanel extends LitElement {
  static styles = css`
    :host { display: flex; flex-direction: column; box-sizing: border-box; width: 468px; height: 538px; background: rgba(235, 235, 235, 0.6); border: 1px solid #c8c8c8; border-radius: 4px; font: 800 33px/44px "Noto Sans", sans-serif; letter-spacing: 0.6px; color: #000; }
    .title { box-sizing: border-box; height: 31px; font-size: 18px; letter-spacing: 0.8px; line-height: 33px; text-align: center; padding-right: 7px; }
    .row { display: flex; height: 56px; align-items: flex-end; }
    .row .name { width: 68px; text-align: center; align-self: center; padding-top: 8px; white-space: nowrap; }
    .form { padding: 0 6px 0 0; }
    .line { flex: 1; height: 2px; background: #000; }
    .note { width: 71px; height: 23px; margin-top: 5px; background: rgba(230, 230, 230, 0.5); }
    .actions { display: flex; align-items: stretch; padding-left: 7px; margin-top: 6px; }
    .rule { width: 1px; margin: 0 18px; background: #c8c8c8; }
    .gap { width: 17px; }
    .pad { width: 9px; }
    .pad.last { width: 6px; }
    .row .mid { width: 38px; }
  `;

  render() {
    return html`
      <div class="title">ДАННЫЕ ПО ОБЪЕКТУ</div>
      <div class="form">
        ${["ТИП", "ХД", "УКР", "X", "Y"].map(
          (n) => html`<div class="row"><span class="name">${n}</span><span class="pad"></span><span class="line"></span></div>`
        )}
        <div class="row">
          <span class="name">СРО</span><span class="pad last"></span><span class="line"></span>
          <span class="name mid">H</span><span class="line"></span>
        </div>
      </div>
      <div class="note"></div>
      <div class="actions">
        <tool-button icon="camera"></tool-button>
        <span class="rule"></span>
        <tool-button icon="trash" kind="off"></tool-button>
        <span class="gap"></span>
        <tool-button icon="plane" kind="off"></tool-button>
      </div>
    `;
  }
}

@customElement("task-bar")
export class TaskBar extends LitElement {
  static styles = css`
    :host { display: flex; align-items: center; box-sizing: border-box; height: 49px; border-top: 1px solid #8fa9bd; background: #4d7394; color: #fff; font: 14px/18px "Noto Sans", sans-serif; }
    svg { display: block; fill: none; stroke: #fff; stroke-width: 1.800; flex: none; }
    .launch { width: 135px; height: 32px; margin-left: 8px; }
    .rule { width: 1px; height: 38px; background: #8fadc4; flex: none; }
    .task { display: flex; align-items: center; box-sizing: border-box; }
    .first { width: 182px; padding-left: 14px; gap: 2px; font-size: 12.600px; letter-spacing: -0.3px; color: #e8edf2; }
    .open { width: 170px; height: 48px; background: #8fadc4; color: #000; font-weight: 800; font-size: 12.600px; padding-left: 6px; gap: 4px; }
    .open span { padding-top: 2px; }
    .space { flex: 1; }
    .tray { width: 111px; height: 34px; }
    .lang { box-sizing: border-box; width: 32px; height: 32px; border: 1px solid #8fadc4; border-radius: 3px; text-align: center; font-size: 16.500px; line-height: 27px; margin: 0 9px 0 6px; }
    .clock { width: 83px; text-align: center; line-height: 15px; font-size: 12px; margin-left: -1px; margin-right: 1px; }
    .time { display: block; font-size: 18px; line-height: 19px; }
    .edge { width: 5px; align-self: stretch; background: #8fadc4; }
  `;

  render() {
    return html`
      <svg class="launch" viewBox="8 952 135 32">
        <path d="M23 953.500L26.600 963.500L36.500 964L28.700 970.500L31.500 981L23 975L14.500 981L17.300 970.500L9.500 964L19.400 963.500Z" stroke-width="1.400"></path>
        <path d="M23 957.500L25.400 965.500L32.500 966L27 970.500L29 977L23 973L17 977L19 970.500L13.500 966L20.600 965.500Z" fill="#e6e6e6" stroke="none"></path>
        <path d="M60 971.500H55V954H79.500V963M61 963.500H85.500V981H61Z"></path><path d="M69 957.500H78M75 967.500H84" stroke-dasharray="2 1"></path>
        <path d="M102 981V954H110V957.500H132.500V981ZM102 957.500H110"></path>
        <path d="M110 971Q117 963 124 971Q117 978 110 971Z"></path><circle cx="117" cy="970.500" r="2"></circle><path d="M111 964L112.500 966M117 962V964.500M123 964L121.500 966"></path>
      </svg>
      <span class="rule"></span>
      <div class="task first">
        <svg width="32" height="22" viewBox="475 80 96 66"><path fill="#111" stroke="none" d="M502 82L514 87H530L543 82L541 96L536 104L540 110L548 106L568 124L560 128L554 138L544 136L534 142L522 148L510 142L500 136L490 139L484 128L475 124L496 106L506 111L508 103L503 96Z"></path><path d="M508 100Q523 90 538 100M513 106Q523 99 533 106M517 113H528M523 113V134" stroke="#4d7394" stroke-width="3"></path></svg>
        <span>МУР</span>
      </div>
      <div class="task open">
        <svg width="28" height="30" viewBox="0 0 28 30"><path stroke="#111" stroke-width="2.600" d="M6 3.500H25Q26.500 3.500 26.500 5V17M2.500 26V11Q2.500 9.500 4 9.500H19.500Q21 9.500 21 11V22Q21 23.500 19.500 23.500H6.500L2.500 27.500Z"></path></svg>
        <span>Военный чат</span>
      </div>
      <span class="space"></span>
      <svg class="tray" viewBox="1671 951 111 34">
        <path d="M1673 963H1678.500L1686.500 956V980L1678.500 973H1673ZM1690 962Q1695.500 968 1690 974"></path>
        <path d="M1717 966.500H1711V954H1731V963M1721 965.500H1741V979H1721ZM1731 979V982.500M1726 982.800H1736M1728 971L1731 974L1735 969M1712 970V976H1717M1714.500 973L1717.500 976L1714.500 979"></path>
        <path d="M1772 957.500H1754Q1752 957.500 1752 960V977Q1752 979.500 1754 979.500H1771L1775 982.500V979.500Q1778.500 979.500 1778.500 977V963M1756 963.500H1774M1756 968H1774M1756 972.500H1771"></path>
        <circle cx="1776" cy="957" r="5" fill="#ee4b4b" stroke="none"></circle>
      </svg>
      <span class="lang">ru</span>
      <span class="rule"></span>
      <div class="clock"><span class="time">11:57</span>СР, 13 МАР</div>
      <span class="edge"></span>
    `;
  }
}

@customElement("app-root")
export class AppRoot extends LitElement {
  static styles = css`
    :host { display: flex; flex-direction: column; width: 1918px; height: 992px; overflow: hidden; background: #e8eaec; }
    .desk { box-sizing: border-box; height: 943px; padding: 1px 1px 0; }
    .window { position: relative; box-sizing: border-box; height: 942px; border: 1px solid #8fc9e8; border-radius: 4px; background: #fff; }
    .map { box-sizing: border-box; width: 1894px; height: 920px; border: solid #e2e2e2; border-width: 0 1px 1px 0; overflow: hidden; }
    terrain-map { width: 1895px; height: 921px; margin: -2px 0 0 -2px; }
    .units { position: absolute; left: 18px; top: 18px; height: 904px; overflow: hidden; display: flex; flex-direction: column; gap: 6px; }
    .top { position: absolute; right: 48px; top: 23px; display: flex; align-items: center; }
    .stamp { box-sizing: border-box; width: 317px; padding: 0 0 6px 19px; text-align: center; font: 800 33px/40px "Noto Sans", sans-serif; letter-spacing: 1.4px; color: #000; }
    .buttons { display: flex; gap: 10px; }
    .tools { position: absolute; right: 48px; top: 791px; display: flex; gap: 10px; }
    .tools .group { display: flex; gap: 10px; margin-left: 20px; }
    object-panel { position: absolute; right: 49px; top: 130px; }
    chat-window { position: absolute; left: 482px; top: 123px; }
    .hbar, .vbar { position: absolute; box-sizing: border-box; background: #bababa; border: 1px solid #939393; border-radius: 4px; }
    .hbar { left: 6px; top: 926px; width: 189px; height: 8px; }
    .vbar { left: 1900px; top: 855px; width: 8px; height: 58px; }
  `;

  render() {
    const units = ["squad", "vehicles", "tank", "mortar", "rocket", "bmp", "apc"];
    const groups = [["compass", "chat", "flag"], ["blast", "square", "target"], ["minus", "plus"]];
    return html`
      <div class="desk">
        <div class="window">
          <div class="map"><terrain-map></terrain-map></div>
          <div class="units">${units.map((u) => html`<tool-button icon=${u} kind="unit"></tool-button>`)}</div>
          <div class="top">
            <tool-button icon="plug" kind="status"></tool-button>
            <div class="stamp">13.03.2024<br>11:57:05</div>
            <div class="buttons">${["locate", "history", "gear"].map((u) => html`<tool-button icon=${u} kind="small"></tool-button>`)}</div>
          </div>
          <object-panel></object-panel>
          <div class="tools">
            ${groups.map((g) => html`<div class="group">${g.map((u) => html`<tool-button icon=${u} kind=${u === "chat" ? "on" : ""}></tool-button>`)}</div>`)}
          </div>
          <chat-window></chat-window>
          <span class="hbar"></span>
          <span class="vbar"></span>
        </div>
      </div>
      <task-bar></task-bar>
    `;
  }
}
